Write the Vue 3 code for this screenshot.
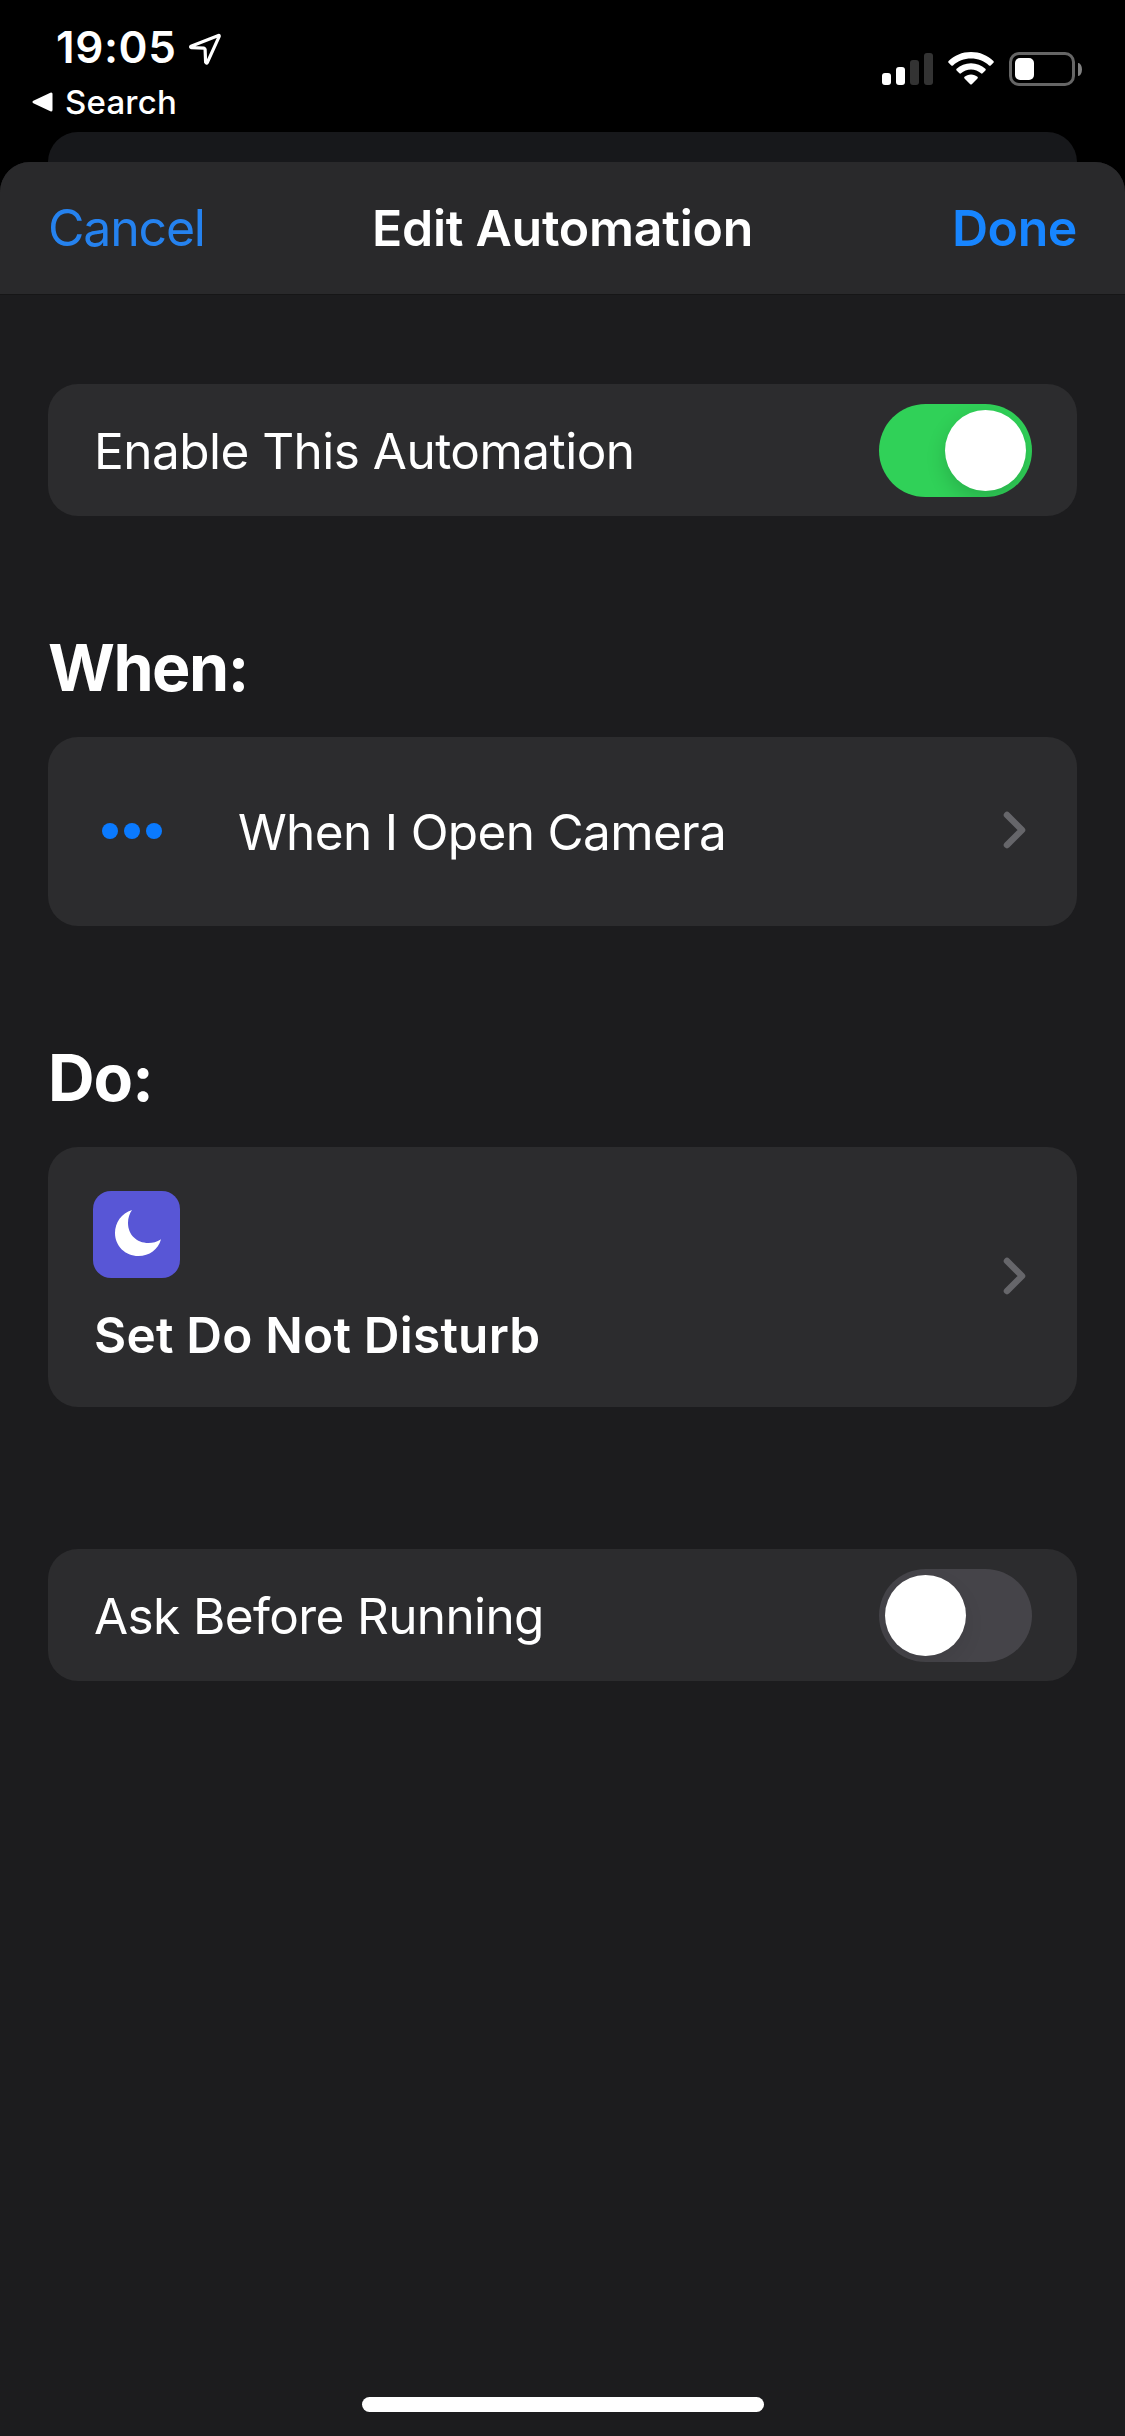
<template>
    <div class="screen">
        <header class="status-bar">
            <div class="status-left">
                <div class="clock">
                    <span class="time">19:05</span>
                    <svg class="location" viewBox="0 0 34 34">
                        <path d="M30.5 3.5 L3 14.2 Q2 15.2 3.4 15.6 L16.2 16.2 Q17 16.4 17.1 17.4 L17.6 30.2 Q18.4 32 19.4 30.4 L31.2 4.4 Q31.4 3.2 30.5 3.5 Z" />
                    </svg>
                </div>
                <div class="back">
                    <svg class="back-arrow" viewBox="0 0 22 20">
                        <path d="M2 10 L19 2 L19 18 Z" />
                    </svg>
                    <span class="back-label">Search</span>
                </div>
            </div>
            <div class="status-right">
                <div class="signal">
                    <span v-for="bar in bars" :key="bar.height" class="bar" :class="{ filled: bar.on }"
                        :style="{ height: bar.height + 'px' }"></span>
                </div>
                <svg class="wifi" viewBox="0 0 46 34">
                    <path d="M23 0 C31.8 0 39.7 3.4 45.4 9 Q46.2 9.9 45.4 10.7 L42.7 13.4 Q41.9 14.1 41 13.4 C36.2 9 29.9 6.6 23 6.6 C16.1 6.6 9.8 9 5 13.4 Q4.1 14.1 3.3 13.4 L0.6 10.7 Q-0.2 9.9 0.6 9 C6.3 3.4 14.2 0 23 0 Z" />
                    <path d="M23 11.2 C28.6 11.2 33.6 13.3 37.4 16.8 Q38.3 17.7 37.4 18.6 L34.6 21.3 Q33.8 22 33 21.3 C30.3 18.9 26.8 17.5 23 17.5 C19.2 17.5 15.7 18.9 13 21.3 Q12.2 22 11.4 21.3 L8.6 18.6 Q7.7 17.7 8.6 16.8 C12.4 13.3 17.4 11.2 23 11.2 Z" />
                    <path d="M23 22.4 C25.6 22.4 27.9 23.3 29.5 24.8 Q30.3 25.6 29.5 26.4 L23.8 32.2 Q23 33 22.2 32.2 L16.5 26.4 Q15.7 25.6 16.5 24.8 C18.1 23.3 20.4 22.4 23 22.4 Z" />
                </svg>
                <div class="battery">
                    <div class="battery-body">
                        <div class="battery-level"></div>
                    </div>
                    <div class="battery-cap"></div>
                </div>
            </div>
        </header>

        <div class="back-sheet"></div>

        <main class="sheet">
            <nav class="nav">
                <span class="nav-cancel">Cancel</span>
                <span class="nav-title">Edit Automation</span>
                <span class="nav-done">Done</span>
            </nav>

            <div class="content">
                <section class="card toggle-card">
                    <span class="label enable-label">Enable This Automation</span>
                    <button class="switch" :class="{ on: enabled }" @click="enabled = !enabled">
                        <span class="knob"></span>
                    </button>
                </section>

                <h2 class="heading when-heading">When:</h2>
                <section class="card when-card">
                    <div class="dots">
                        <span v-for="dot in 3" :key="dot" class="dot"></span>
                    </div>
                    <span class="label when-label">When I Open Camera</span>
                    <svg class="chevron" viewBox="0 0 24 38">
                        <path d="M4 4 L19 19 L4 34" />
                    </svg>
                </section>

                <h2 class="heading do-heading">Do:</h2>
                <section class="card do-card">
                    <div class="action">
                        <div class="action-icon">
                            <svg class="moon" viewBox="0 0 46 46">
                                <path d="M17 0 C6.5 3.4 0 12.5 0 23 C0 36 10.3 46 23.5 46 C34.3 46 43.2 39.5 46 29.2 C41.8 32 37.8 33 33.5 33 C21.5 33 13 24.5 13 13 C13 8 14.5 3.5 17 0 Z" />
                            </svg>
                        </div>
                        <span class="label action-label">Set Do Not Disturb</span>
                    </div>
                    <svg class="chevron" viewBox="0 0 24 38">
                        <path d="M4 4 L19 19 L4 34" />
                    </svg>
                </section>

                <section class="card toggle-card ask-card">
                    <span class="label ask-label">Ask Before Running</span>
                    <button class="switch" :class="{ on: askFirst }" @click="askFirst = !askFirst">
                        <span class="knob"></span>
                    </button>
                </section>
            </div>

            <div class="home-indicator"></div>
        </main>
    </div>
</template>

<script setup>
import { ref } from 'vue';

const enabled = ref(true);
const askFirst = ref(false);

const bars = [
    { height: 12, on: true },
    { height: 18, on: true },
    { height: 25, on: false },
    { height: 32, on: false },
];
</script>

<style>
body {
    margin: 0;
    background: #000;
}
</style>

<style scoped>
.screen {
    display: flex;
    flex-direction: column;
    width: 1125px;
    height: 2436px;
    overflow: hidden;
    background: #000;
    color: #fff;
    font-family: Inter, "Liberation Sans", sans-serif;
}

.status-bar {
    display: flex;
    justify-content: space-between;
    flex: none;
    height: 132px;
}

.status-left {
    display: flex;
    flex-direction: column;
    padding: 22px 0 0 32px;
}

.clock {
    display: flex;
    align-items: center;
    height: 50px;
    padding-left: 24px;
}

.time {
    width: 132px;
    font-size: 44px;
    font-weight: 600;
    letter-spacing: 0.6px;
    line-height: 50px;
}

.location {
    width: 34px;
    height: 34px;
    margin-top: 3px;
    fill: none;
    stroke: #fff;
    stroke-width: 3.2;
    stroke-linejoin: round;
}

.back {
    display: flex;
    align-items: center;
    gap: 11px;
    height: 40px;
    margin-top: 10px;
}

.back-arrow {
    width: 22px;
    height: 20px;
    fill: #fff;
    stroke: #fff;
    stroke-width: 3;
    stroke-linejoin: round;
}

.back-label {
    font-size: 33px;
    font-weight: 500;
    letter-spacing: 0.2px;
    line-height: 40px;
}

.status-right {
    display: flex;
    align-items: flex-end;
    height: 86px;
    padding-right: 43px;
}

.signal {
    display: flex;
    align-items: flex-end;
    gap: 5px;
    height: 33px;
    margin: 0 15px 1px 0;
}

.bar {
    width: 9px;
    border-radius: 3px;
    background: #333;
}

.bar.filled {
    background: #fff;
}

.wifi {
    width: 46px;
    height: 34px;
    margin-right: 15px;
    fill: #fff;
}

.battery {
    display: flex;
    align-items: center;
    gap: 3px;
}

.battery-body {
    box-sizing: border-box;
    width: 66px;
    height: 34px;
    padding: 3px;
    border: 3px solid #666;
    border-radius: 10px;
}

.battery-level {
    width: 19px;
    height: 22px;
    border-radius: 5px;
    background: #fff;
}

.battery-cap {
    width: 4px;
    height: 13px;
    border-radius: 0 4px 4px 0 / 0 7px 7px 0;
    background: #808080;
}

.back-sheet {
    flex: none;
    height: 30px;
    margin: 0 48px;
    border-radius: 30px 30px 0 0;
    background: #17181b;
}

.sheet {
    display: flex;
    flex: 1;
    flex-direction: column;
    overflow: hidden;
    border-radius: 30px 30px 0 0;
    background: #1c1c1e;
}

.nav {
    display: grid;
    grid-template-columns: 1fr auto 1fr;
    align-items: center;
    box-sizing: border-box;
    flex: none;
    height: 133px;
    border-bottom: 1px solid #161617;
    padding: 0 48px;
    background: #29292b;
    font-size: 50px;
}

.nav-cancel {
    color: #2582ef;
    letter-spacing: -1.2px;
}

.nav-title {
    font-weight: 600;
    letter-spacing: -0.25px;
}

.nav-done {
    color: #1785ff;
    font-weight: 600;
    letter-spacing: -0.4px;
    text-align: right;
}

.content {
    display: flex;
    flex: 1;
    flex-direction: column;
    padding: 89px 48px 0;
}

.card {
    display: flex;
    align-items: center;
    box-sizing: border-box;
    border-radius: 30px;
    background: #2c2c2e;
}

.toggle-card {
    justify-content: space-between;
    height: 132px;
    padding: 0 45px;
}

.label {
    font-size: 49.5px;
    line-height: 60px;
    white-space: nowrap;
}

.toggle-card .label {
    padding-top: 2px;
}

.enable-label {
    padding-left: 1px;
    letter-spacing: -0.53px;
}

.ask-label {
    padding-left: 1px;
    letter-spacing: -0.62px;
}

.switch {
    display: flex;
    box-sizing: border-box;
    width: 153px;
    height: 93px;
    border: 0;
    border-radius: 47px;
    padding: 6px;
    background: #454449;
    overflow: hidden;
}

.switch.on {
    justify-content: flex-end;
    background: #30d158;
}

.knob {
    width: 81px;
    height: 81px;
    border-radius: 50%;
    background: #fff;
    box-shadow: 0 8px 20px rgba(0, 0, 0, 0.08);
}

.switch.on .knob {
    box-shadow: 0 8px 20px rgba(0, 0, 0, 0.16);
}

.heading {
    height: 80px;
    margin: 112px 0 0;
    font-size: 64.5px;
    font-weight: 700;
    line-height: 80px;
}

.when-heading {
    letter-spacing: -1.5px;
}

.do-heading {
    letter-spacing: -1px;
}

.when-card {
    height: 189px;
    margin-top: 29px;
    padding: 0 50px 0 54px;
}

.dots {
    display: flex;
    gap: 6px;
    width: 136px;
    padding-bottom: 2px;
}

.dot {
    width: 16px;
    height: 16px;
    border-radius: 50%;
    background: #0a7aff;
}

.when-label {
    padding-top: 1px;
    letter-spacing: -0.66px;
}

.chevron {
    width: 24px;
    height: 38px;
    margin: 0 0 3px auto;
    fill: none;
    stroke: #66666a;
    stroke-width: 6.5;
    stroke-linecap: round;
    stroke-linejoin: round;
}

.do-card {
    height: 260px;
    margin-top: 29px;
    padding: 0 50px 0 45px;
}

.action {
    display: flex;
    flex-direction: column;
    gap: 27px;
    padding-top: 2px;
}

.action-icon {
    display: flex;
    align-items: center;
    justify-content: center;
    box-sizing: border-box;
    width: 87px;
    height: 87px;
    padding: 0 0 3px 3px;
    border-radius: 18px;
    background: #5856d6;
}

.moon {
    width: 46px;
    height: 46px;
    fill: #fff;
}

.action-label {
    padding-left: 1px;
    font-weight: 600;
    letter-spacing: 0.22px;
}

.ask-card {
    margin-top: 142px;
}

.home-indicator {
    flex: none;
    align-self: center;
    width: 402px;
    height: 15px;
    margin-bottom: 24px;
    border-radius: 8px;
    background: #fff;
}
</style>
